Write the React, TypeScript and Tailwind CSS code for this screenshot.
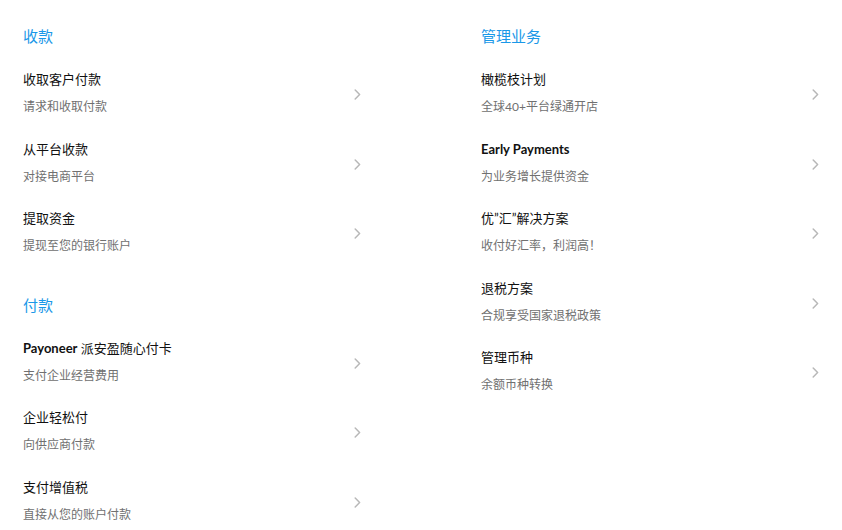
import React from "react";

type Item = { title: React.ReactNode; key: string; desc: string };
type Section = { heading: string; items: Item[] };

const Latin = ({ children }: { children: React.ReactNode }) => (
  <span className="font-bold">{children}</span>
);

const leftSections: Section[] = [
  {
    heading: "收款",
    items: [
      { key: "a1", title: "收取客户付款", desc: "请求和收取付款" },
      { key: "a2", title: "从平台收款", desc: "对接电商平台" },
      { key: "a3", title: "提取资金", desc: "提现至您的银行账户" },
    ],
  },
  {
    heading: "付款",
    items: [
      {
        key: "b1",
        title: (
          <>
            <Latin>Payoneer</Latin> 派安盈随心付卡
          </>
        ),
        desc: "支付企业经营费用",
      },
      { key: "b2", title: "企业轻松付", desc: "向供应商付款" },
      { key: "b3", title: "支付增值税", desc: "直接从您的账户付款" },
    ],
  },
];

const rightSections: Section[] = [
  {
    heading: "管理业务",
    items: [
      { key: "c1", title: "橄榄枝计划", desc: "全球40+平台绿通开店" },
      { key: "c2", title: <Latin>Early Payments</Latin>, desc: "为业务增长提供资金" },
      { key: "c3", title: "优”汇”解决方案", desc: "收付好汇率，利润高！" },
      { key: "c4", title: "退税方案", desc: "合规享受国家退税政策" },
      { key: "c5", title: "管理币种", desc: "余额币种转换" },
    ],
  },
];

const Chevron = () => (
  <svg width="7" height="11" viewBox="0 0 7 11" fill="none" className="mt-[4px] mr-[4px] shrink-0">
    <path d="M1.2 1L5.6 5.5L1.2 10" stroke="#b8b8b8" strokeWidth="1.5" strokeLinecap="round" strokeLinejoin="round" />
  </svg>
);

const MenuRow = ({ item }: { item: Item }) => (
  <a href="#" className="flex h-[69.5px] items-center justify-between">
    <div className="flex flex-col gap-[9px]">
      <span className="text-[13px] leading-[20px] font-normal text-[#111111]">{item.title}</span>
      <span className="text-[12px] leading-[18px] text-[#707070]">{item.desc}</span>
    </div>
    <Chevron />
  </a>
);

const MenuColumn = ({ sections }: { sections: Section[] }) => (
  <div className="flex flex-col gap-[27px]">
    {sections.map((s) => (
      <section key={s.heading} className="flex flex-col gap-[11px]">
        <h3 className="text-[15px] leading-[22px] font-normal text-[#1a98e8]">{s.heading}</h3>
        <div className="flex flex-col">
          {s.items.map((it) => (
            <MenuRow key={it.key} item={it} />
          ))}
        </div>
      </section>
    ))}
  </div>
);

export default function App() {
  return (
    <div
      className="min-h-screen bg-white pt-[25px] pl-[23px] pr-[19px]"
      style={{ fontFamily: 'Lato, "Noto Sans CJK SC", sans-serif' }}
    >
      <div className="grid grid-cols-2 gap-x-[116px]">
        <MenuColumn sections={leftSections} />
        <MenuColumn sections={rightSections} />
      </div>
    </div>
  );
}
